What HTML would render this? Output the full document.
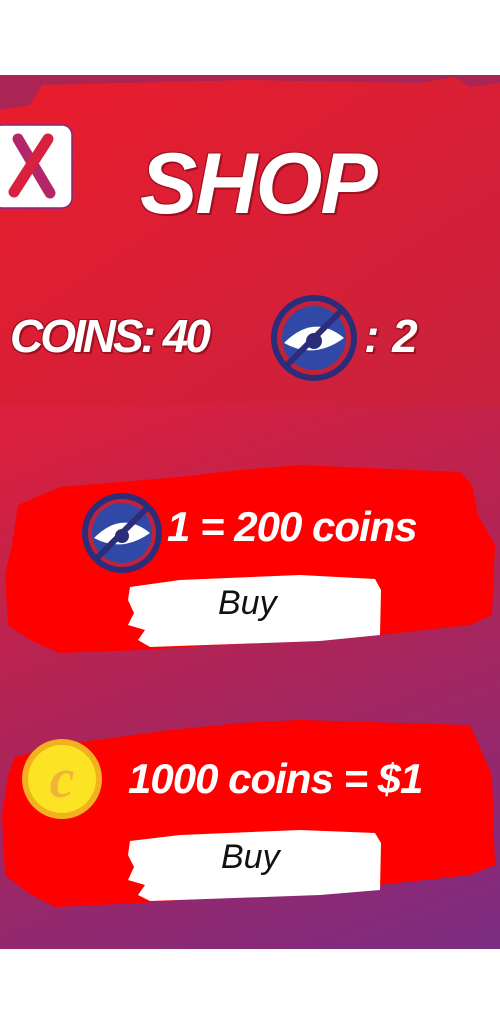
<!DOCTYPE html>
<html><head><meta charset="utf-8"><style>
html,body{margin:0;padding:0;width:500px;height:1024px;background:#fff;overflow:hidden}
#app{position:absolute;left:0;top:75px;width:500px;height:874px;background:linear-gradient(160deg,#e81f33 0%,#d9203e 35%,#b02456 62%,#7b2c82 100%);overflow:hidden}
svg{position:absolute;left:0;top:0}
.t{position:absolute;color:#fff;font-family:"Liberation Sans",sans-serif;font-weight:bold;font-style:italic;white-space:nowrap}
.sh{text-shadow:2px 2px 0 #9c1020,-1px -1px 0 #9c1020,1px -1px 0 #9c1020,-1px 1px 0 #9c1020}
.buy{position:absolute;color:#111;font-family:"Liberation Sans",sans-serif;font-style:italic;font-size:34px}
</style></head><body>
<div id="app">
<svg width="500" height="874" viewBox="0 0 500 874">
 <defs><linearGradient id="tg" x1="0" y1="0" x2="1" y2="1"><stop offset="0" stop-color="#ea1c2c"/><stop offset="1" stop-color="#c8223f"/></linearGradient></defs>
 <rect x="0" y="0" width="500" height="40" fill="#7a2a70" opacity="0.55"/>
 <path d="M0 35 L30 30 L42 10 L250 5 L420 8 L455 2 L470 12 L500 8 L500 330 L0 330 Z" fill="url(#tg)"/>
 <!-- banner 1 -->
 <path d="M18 430 L60 412 L180 402 L240 395 L300 390 L460 397 L472 410 L478 440 L495 470 L492 540 L470 550 L380 560 L140 575 L60 578 L30 565 L8 550 L5 500 L12 470 Z" fill="#fe0000"/>
 <path d="M130 512 L180 505 L300 500 L375 504 L381 515 L380 560 L320 566 L150 572 L138 565 L145 555 L128 550 L134 538 L128 525 Z" fill="#fff"/>
 <!-- banner 2 -->
 <path d="M15 682 L60 670 L170 655 L240 648 L300 645 L470 650 L478 668 L492 700 L495 790 L470 800 L380 810 L140 828 L55 832 L28 818 L5 800 L2 740 L8 700 Z" fill="#fe0000"/>
 <path d="M130 766 L180 760 L300 755 L375 758 L381 768 L380 815 L320 820 L150 826 L138 820 L145 810 L128 805 L134 792 L128 780 Z" fill="#fff"/>
 <!-- X button -->
 <rect x="-8" y="50" width="80" height="83" rx="10" fill="#fff" stroke="#7a2c82" stroke-width="1.5"/>
 <line x1="18" y1="64" x2="50" y2="118" stroke="#b3266a" stroke-width="11" stroke-linecap="round"/>
 <line x1="48" y1="64" x2="14" y2="117" stroke="#d8203f" stroke-width="11" stroke-linecap="round"/>
 <!-- eye icon 1 -->
 <g transform="translate(314,263)">
  <circle r="43" fill="#2b2d7a"/><circle r="37" fill="#c32137"/><circle r="32" fill="#3149a6"/>
  <path d="M-30 5 Q0 -25 30 0 Q0 22 -30 5Z" fill="#fff"/>
  <circle cx="0" cy="3" r="8" fill="#2b2d7a"/>
  <line x1="27" y1="-27" x2="-27" y2="27" stroke="#2b2d7a" stroke-width="6"/>
 </g>
 <!-- eye icon 2 -->
 <g transform="translate(122,458)">
  <circle r="40" fill="#2b2d7a"/><circle r="34" fill="#c32137"/><circle r="30" fill="#3149a6"/>
  <path d="M-28 5 Q0 -23 28 0 Q0 20 -28 5Z" fill="#fff"/>
  <circle cx="0" cy="3" r="7" fill="#2b2d7a"/>
  <line x1="25" y1="-25" x2="-25" y2="25" stroke="#2b2d7a" stroke-width="6"/>
 </g>
 <!-- coin -->
 <g transform="translate(62,704)">
  <circle r="40" fill="#f2b11e"/><circle r="34" fill="#fce323"/>
  <text x="0" y="18" text-anchor="middle" font-family="Liberation Serif" font-style="italic" font-weight="bold" font-size="56" fill="#f1b43a">c</text>
 </g>
</svg>
<div class="t sh" style="left:140px;top:60px;font-size:86px;letter-spacing:-2px">SHOP</div>
<div class="t sh" style="left:10px;top:234px;font-size:46px;letter-spacing:-3px">COINS: 40</div>
<div class="t sh" style="left:364px;top:234px;font-size:46px">: 2</div>
<div class="t" style="left:167px;top:428px;font-size:42px;letter-spacing:-1px">1 = 200 coins</div>
<div class="t" style="left:128px;top:680px;font-size:42px;letter-spacing:-1px">1000 coins = $1</div>
<div class="buy" style="left:218px;top:509px">Buy</div>
<div class="buy" style="left:221px;top:763px">Buy</div>
</div>
</body></html>
